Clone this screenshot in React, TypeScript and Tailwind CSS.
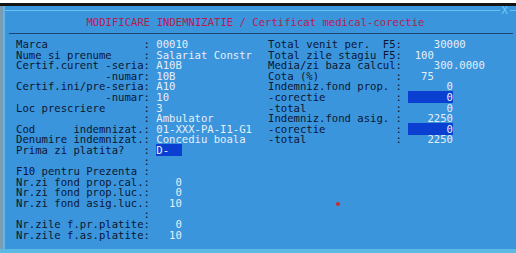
type Row = {
  label: string;
  value?: string;
  box?: boolean;
};

// ecran tip terminal, toate etichetele au 21 de caractere (":" pe ultima pozitie)
const leftRows: Row[] = [
  { label: "Marca               :", value: "00010" },
  { label: "Nume si prenume     :", value: "Salariat Constr" },
  { label: "Certif.curent -seria:", value: "A10B" },
  { label: "              -numar:", value: "10B" },
  { label: "Certif.ini/pre-seria:", value: "A10" },
  { label: "              -numar:", value: "10" },
  { label: "Loc prescriere      :", value: "3" },
  { label: "                    :", value: "Ambulator" },
  { label: "Cod      indemnizat.:", value: "01-XXX-PA-I1-G1" },
  { label: "Denumire indemnizat.:", value: "Concediu boala" },
  { label: "Prima zi platita?   :", value: "D-  ", box: true },
  { label: "                    :" },
  { label: "F10 pentru Prezenta :" },
  { label: "Nr.zi fond prop.cal.:", value: "   0" },
  { label: "Nr.zi fond prop.luc.:", value: "   0" },
  { label: "Nr.zi fond asig.luc.:", value: "  10" },
  { label: "                    :" },
  { label: "Nr.zile f.pr.platite:", value: "   0" },
  { label: "Nr.zile f.as.platite:", value: "  10" },
];

const rightRows: Row[] = [
  { label: "Total venit per.  F5:", value: "    30000" },
  { label: "Total zile stagiu F5:", value: " 100" },
  { label: "Media/zi baza calcul:", value: "    300.0000" },
  { label: "Cota (%)            :", value: "  75" },
  { label: "Indemniz.fond prop. :", value: "      0" },
  { label: "-corectie           :", value: "      0", box: true },
  { label: "-total              :", value: "      0" },
  { label: "Indemniz.fond asig. :", value: "   2250" },
  { label: "-corectie           :", value: "      0", box: true },
  { label: "-total              :", value: "   2250" },
];

const Line = ({ label, value, box }: Row) => (
  <div className="h-[10.6px] whitespace-pre">
    <span className="text-[#0b1633]">{label} </span>
    {value !== undefined && (
      <span className={box ? "bg-[#0a3fd2] text-[#eef3ff]" : "text-[#e6eefa]"}>{value}</span>
    )}
  </div>
);

export default function App() {
  return (
    <div className="relative w-[516px] h-[253px] overflow-hidden bg-[#3a95dc] font-['DejaVu_Sans_Mono',monospace] text-[10.6px] leading-[10.6px]">
      <div className="h-[3px] bg-white" />
      <div className="h-[3px] bg-[#141414]" />
      <div className="flex h-[243px]">
        <div className="w-[3px] bg-[#7c9cb6]" />
        <div className="flex-1 flex flex-col border-l-2 border-[#5db7e7]">
          <div className="mt-[4px] flex items-center h-px">
            <div className="flex-1 h-px bg-[#66c4ef]" />
            <span className="px-[2px] text-[#6fcaf2] leading-none">X</span>
            <div className="w-[6px] h-px bg-[#66c4ef]" />
          </div>
          <div className="mt-[6px] h-[11px] flex justify-center pr-[10px] whitespace-pre text-[#b51c50]">
            MODIFICARE INDEMNIZATIE / Certificat medical-corectie
          </div>
          <div className="mt-[5px] ml-[4px] mr-[3px] h-px bg-[#1c4670]" />
          <div className="mt-[5px] flex pl-[11px]">
            <div className="w-[252px] flex flex-col">
              {leftRows.map((r, i) => (
                <Line key={i} {...r} />
              ))}
            </div>
            <div className="flex flex-col">
              {rightRows.map((r, i) => (
                <Line key={i} {...r} />
              ))}
            </div>
          </div>
        </div>
      </div>
      <div className="h-[4px] bg-[#5abae4]" />
      <div className="absolute left-[336px] top-[202px] w-[4px] h-[4px] rounded-full bg-[#d42a2a]" />
    </div>
  );
}
